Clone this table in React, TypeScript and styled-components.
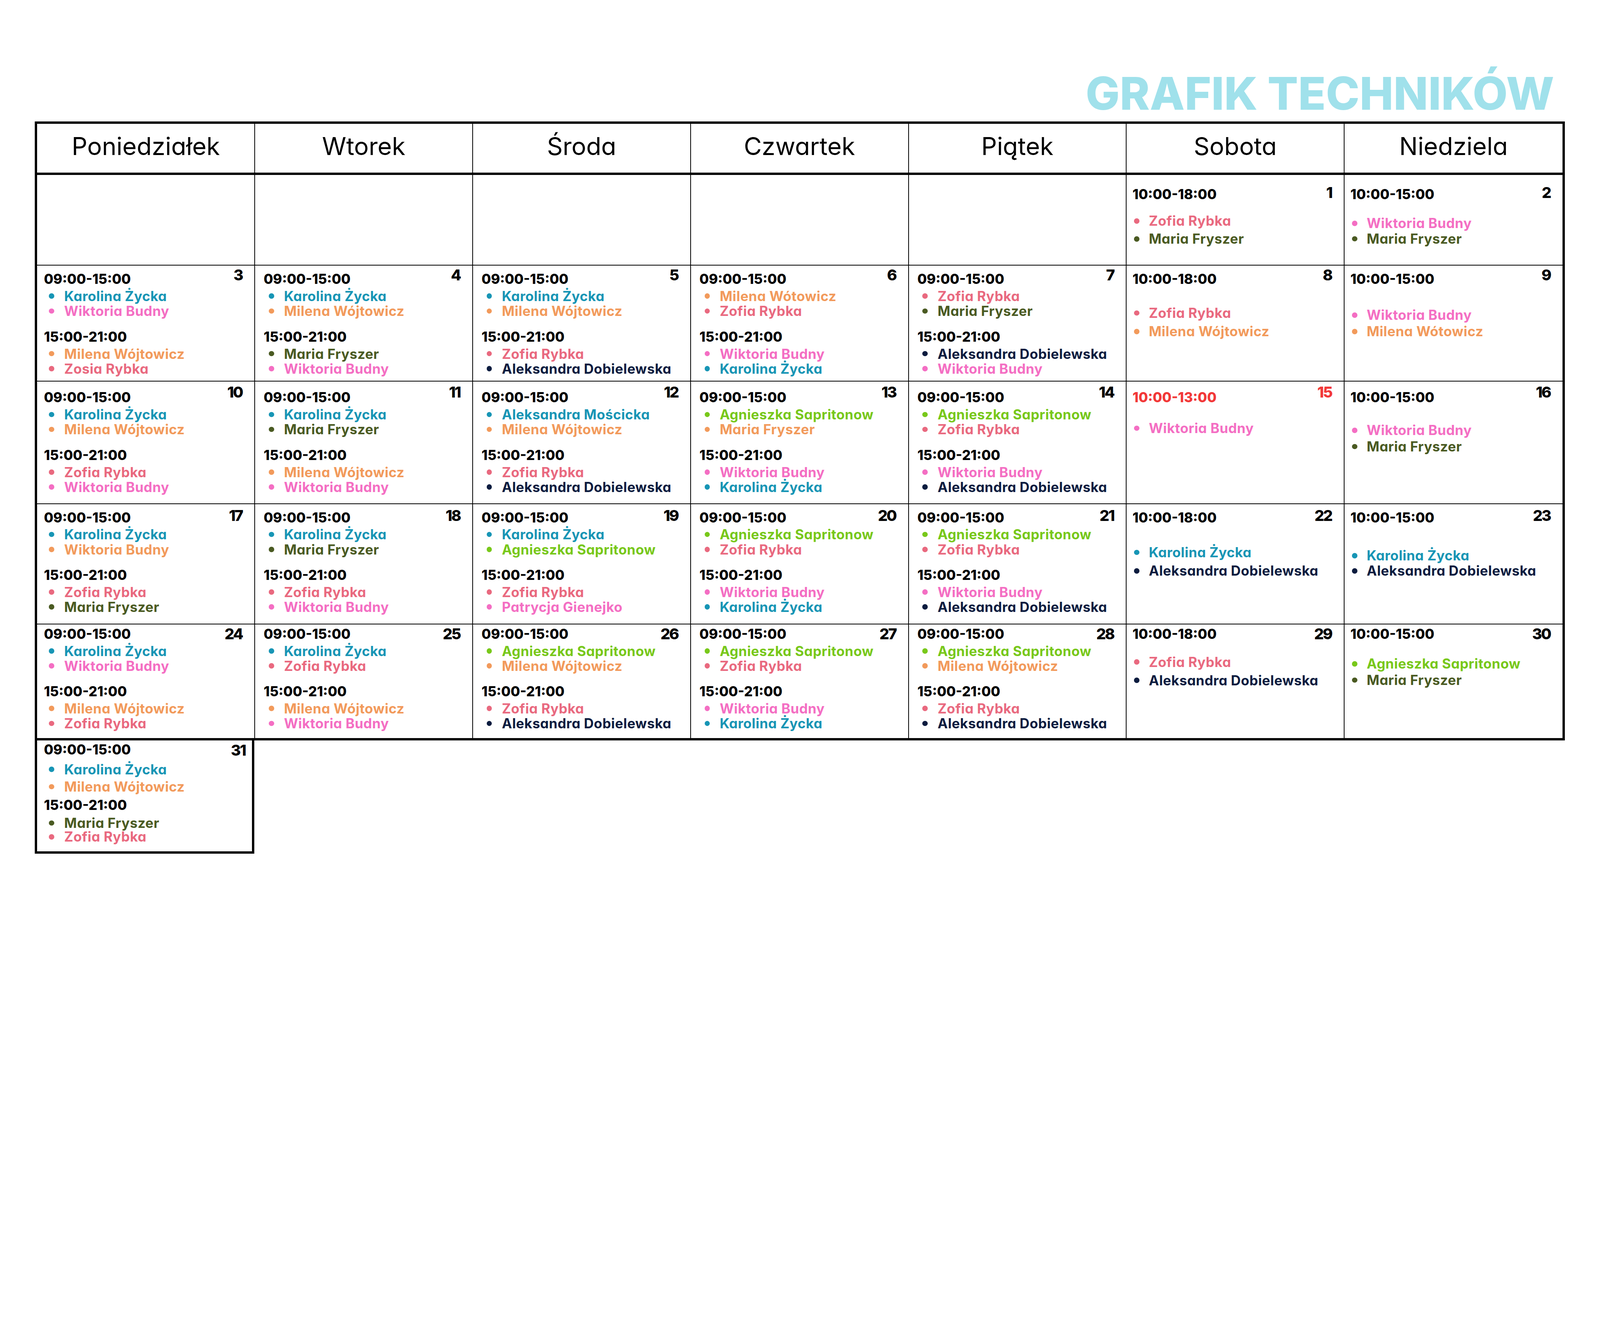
import React, { useLayoutEffect, useState } from "react";
import styled, { createGlobalStyle } from "styled-components";

const GlobalStyle = createGlobalStyle`
  html, body { margin: 0; padding: 0; background: #ffffff; overflow: hidden; }
  body {
    font-family: Inter, "Noto Sans", "Liberation Sans", sans-serif;
    font-feature-settings: "cv11" 1;
    color: #000;
  }
  * { box-sizing: border-box; }
`;

const F_TIME = 51;
const F_NAME = 51;
const LT = 70;
const K = 0.364;

const C = {
  teal: "#1795B5",
  pink: "#F46EC3",
  orange: "#F29A5B",
  rose: "#E9697F",
  olive: "#4A5A22",
  navy: "#0C1C3F",
  green: "#78C81A",
  red: "#F23838",
};

type Person = { name: string; color: string };
type Shift = { time: string; people: Person[]; lead?: number; step?: number; gap?: number };
type Day = {
  date: number;
  shifts: Shift[];
  weekend?: boolean;
  red?: boolean;
};
type Row = { height: number; top: number; dateTop: number; days: (Day | null)[]; last?: boolean };

const p = (name: string, color: string): Person => ({ name, color });
const KZ = p("Karolina Życka", C.teal);
const WB = p("Wiktoria Budny", C.pink);
const MW = p("Milena Wójtowicz", C.orange);
const MWt = p("Milena Wótowicz", C.orange);
const ZR = p("Zofia Rybka", C.rose);
const ZsR = p("Zosia Rybka", C.rose);
const MF = p("Maria Fryszer", C.olive);
const AD = p("Aleksandra Dobielewska", C.navy);
const AM = p("Aleksandra Mościcka", C.teal);
const AS = p("Agnieszka Sapritonow", C.green);
const PG = p("Patrycja Gienejko", C.pink);
const MFo = p("Maria Fryszer", C.orange);
const WBo = p("Wiktoria Budny", C.orange);

const wk = (date: number, a: Person[], b: Person[]): Day => ({
  date,
  shifts: [
    { time: "09:00-15:00", people: a },
    { time: "15:00-21:00", people: b },
  ],
});

const we = (
  date: number,
  time: string,
  people: Person[],
  lead: number,
  step: number,
  red?: boolean
): Day => ({ date, weekend: true, red, shifts: [{ time, people, lead, step }] });

const rows: Row[] = [
  {
    height: 337,
    top: 91,
    dateTop: 38,
    days: [
      null, null, null, null, null,
      we(1, "10:00-18:00", [ZR, MF], 100, 67),
      we(2, "10:00-15:00", [WB, MF], 109, 58),
    ],
  },
  {
    height: 431,
    top: 70,
    dateTop: 7,
    days: [
      wk(3, [KZ, WB], [MW, ZsR]),
      wk(4, [KZ, MW], [MF, WB]),
      wk(5, [KZ, MW], [ZR, AD]),
      wk(6, [MWt, ZR], [WB, KZ]),
      wk(7, [ZR, MF], [AD, WB]),
      we(8, "10:00-18:00", [ZR, MW], 126, 69),
      we(9, "10:00-15:00", [WB, MWt], 134, 61),
    ],
  },
  {
    height: 458,
    top: 80,
    dateTop: 12,
    days: [
      wk(10, [KZ, MW], [ZR, WB]),
      wk(11, [KZ, MF], [MW, WB]),
      wk(12, [AM, MW], [ZR, AD]),
      wk(13, [AS, MFo], [WB, KZ]),
      wk(14, [AS, ZR], [WB, AD]),
      we(15, "10:00-13:00", [WB], 114, 61, true),
      we(16, "10:00-15:00", [WB, MF], 122, 61),
    ],
  },
  {
    height: 447,
    top: 69,
    dateTop: 14,
    days: [
      wk(17, [KZ, WBo], [ZR, MF]),
      wk(18, [KZ, MF], [ZR, WB]),
      wk(19, [KZ, AS], [ZR, PG]),
      wk(20, [AS, ZR], [WB, KZ]),
      wk(21, [AS, ZR], [WB, AD]),
      we(22, "10:00-18:00", [KZ, AD], 130, 69),
      we(23, "10:00-15:00", [KZ, AD], 142, 57),
    ],
  },
  {
    height: 427,
    top: 56,
    dateTop: 8,
    last: true,
    days: [
      wk(24, [KZ, WB], [MW, ZR]),
      wk(25, [KZ, ZR], [MW, WB]),
      wk(26, [AS, MW], [ZR, AD]),
      wk(27, [AS, ZR], [WB, KZ]),
      wk(28, [AS, MW], [ZR, AD]),
      we(29, "10:00-18:00", [ZR, AD], 104, 69),
      we(30, "10:00-15:00", [AS, MF], 111, 61),
    ],
  },
];

const tailDay: Day = {
  date: 31,
  shifts: [
    { time: "09:00-15:00", people: [KZ, MW], lead: 73, step: 65 },
    { time: "15:00-21:00", people: [MF, ZR], lead: 67, step: 52, gap: 69 },
  ],
};

const DAYS = ["Poniedziałek", "Wtorek", "Środa", "Czwartek", "Piątek", "Sobota", "Niedziela"];

/* ---------- styled parts ---------- */

const Page = styled.div`
  width: 6000px;
  height: 3375px;
  padding: 265px 0 0 131px;
  display: flex;
  flex-direction: column;
  align-items: flex-start;
  background: #fff;
`;

const TitleRow = styled.div`
  width: 5737px;
  display: flex;
  justify-content: flex-end;
  padding-right: 40px;
  margin-bottom: 21px;
`;

const Title = styled.h1`
  margin: 0;
  font-family: Inter, "Noto Sans", sans-serif;
  font-weight: 800;
  font-size: 170px;
  line-height: 170px;
  color: #a0e1eb;
  white-space: nowrap;
`;

const Board = styled.div`
  width: 5737px;
  border: 9px solid #000;
  display: grid;
  grid-template-columns: repeat(7, 1fr);
`;

const HeadCell = styled.div<{ $last: boolean }>`
  height: 192px;
  padding-bottom: 16px;
  border-bottom: 9px solid #000;
  border-right: ${(p) => (p.$last ? "0" : "3px solid #000")};
  display: flex;
  align-items: center;
  justify-content: center;
  font-weight: 400;
  font-size: 92px;
  color: #000;
  white-space: nowrap;
`;

const Cell = styled.div<{
  $h: number;
  $last: boolean;
  $bottom: boolean;
  $pad: number;
  $weekend: boolean;
  $first: boolean;
}>`
  position: relative;
  height: ${(p) => p.$h + (p.$bottom ? 0 : 3)}px;
  border-right: ${(p) => (p.$last ? "0" : "3px solid #000")};
  border-bottom: ${(p) => (p.$bottom ? "0" : "3px solid #000")};
  padding-top: ${(p) => p.$pad}px;
  padding-left: ${(p) => (p.$weekend ? 22 : p.$first ? 25 : 32)}px;
  display: flex;
  flex-direction: column;
`;

const TailCell = styled.div<{ $pad: number }>`
  position: relative;
  width: 823px;
  height: 424px;
  border: 9px solid #000;
  border-top: 0;
  padding-top: ${(p) => p.$pad}px;
  padding-left: 25px;
  display: flex;
  flex-direction: column;
`;

const DateNum = styled.div<{ $top: number; $right?: number; $red?: boolean }>`
  position: absolute;
  top: ${(p) => p.$top}px;
  right: ${(p) => p.$right ?? 45}px;
  font-weight: 800;
  font-size: 57px;
  line-height: 57px;
  letter-spacing: -4px;
  color: ${(p) => (p.$red ? C.red : "#000")};
`;

const ShiftBlock = styled.div<{ $mt: number }>`
  margin-top: ${(p) => p.$mt}px;
  display: flex;
  flex-direction: column;
  align-items: flex-start;
`;

const Time = styled.div<{ $red?: boolean }>`
  font-weight: 800;
  font-size: ${F_TIME}px;
  line-height: ${LT}px;
  height: ${LT}px;
  color: ${(p) => (p.$red ? C.red : "#000")};
  white-space: nowrap;
`;

const NameList = styled.ul<{ $mt: number; $weekend: boolean }>`
  list-style: none;
  margin: ${(p) => p.$mt}px 0 0 0;
  padding: 0 0 0 ${(p) => (p.$weekend ? 6 : 19)}px;
  display: flex;
  flex-direction: column;
`;

const NameRow = styled.li<{ $step: number; $weekend: boolean }>`
  display: flex;
  align-items: center;
  height: ${(p) => p.$step}px;
  line-height: ${(p) => p.$step}px;
  gap: ${(p) => (p.$weekend ? 35 : 37)}px;
`;

const Dot = styled.span<{ $c: string }>`
  flex: none;
  width: 20px;
  height: 20px;
  border-radius: 50%;
  background: ${(p) => p.$c};
`;

const Name = styled.span<{ $c: string }>`
  font-weight: 700;
  font-size: ${F_NAME}px;
  letter-spacing: 0.7px;
  color: ${(p) => p.$c};
  white-space: nowrap;
`;

/* ---------- components ---------- */

function Shifts({ day, weekend }: { day: Day; weekend: boolean }) {
  return (
    <>
      {day.shifts.map((s, i) => {
        const lead = s.lead ?? 63;
        const step = s.step ?? 56;
        const nameMt = Math.round(lead - LT / 2 - step / 2 + K * (F_TIME - F_NAME));
        let blockMt = 0;
        if (i > 0) {
          const prevStep = day.shifts[i - 1].step ?? 56;
          const gap = s.gap ?? 97;
          blockMt = Math.round(gap - prevStep / 2 + K * F_NAME - LT / 2 - K * F_TIME);
        }
        return (
          <ShiftBlock key={i} $mt={blockMt}>
            <Time $red={day.red}>{s.time}</Time>
            <NameList $mt={nameMt} $weekend={weekend}>
              {s.people.map((person, j) => (
                <NameRow key={j} $step={step} $weekend={weekend}>
                  <Dot $c={person.color} />
                  <Name $c={person.color}>{person.name}</Name>
                </NameRow>
              ))}
            </NameList>
          </ShiftBlock>
        );
      })}
    </>
  );
}

const padFor = (top: number) => Math.max(0, Math.round(top - LT / 2 - K * F_TIME));

export default function App() {
  const [scale, setScale] = useState(() =>
    typeof window !== "undefined" ? Math.min(1, window.innerWidth / 6000) : 1
  );
  useLayoutEffect(() => {
    const on = () => setScale(Math.min(1, window.innerWidth / 6000));
    on();
    window.addEventListener("resize", on);
    return () => window.removeEventListener("resize", on);
  }, []);

  return (
    <>
      <GlobalStyle />
      <Page style={{ zoom: scale }}>
        <TitleRow>
          <Title>GRAFIK TECHNIKÓW</Title>
        </TitleRow>
        <Board>
          {DAYS.map((d, i) => (
            <HeadCell key={d} $last={i === 6}>
              {d}
            </HeadCell>
          ))}
          {rows.map((row, ri) =>
            row.days.map((day, ci) => {
              const weekend = ci >= 5;
              return (
                <Cell
                  key={`${ri}-${ci}`}
                  $h={row.height}
                  $last={ci === 6}
                  $first={ci === 0}
                  $bottom={!!row.last}
                  $pad={padFor(row.top)}
                  $weekend={weekend}
                >
                  {day && (
                    <>
                      <DateNum $top={row.dateTop} $red={day.red}>
                        {day.date}
                      </DateNum>
                      <Shifts day={day} weekend={weekend} />
                    </>
                  )}
                </Cell>
              );
            })
          )}
        </Board>
        <TailCell $pad={padFor(50)}>
          <DateNum $top={8} $right={25}>
            {tailDay.date}
          </DateNum>
          <Shifts day={tailDay} weekend={false} />
        </TailCell>
      </Page>
    </>
  );
}
